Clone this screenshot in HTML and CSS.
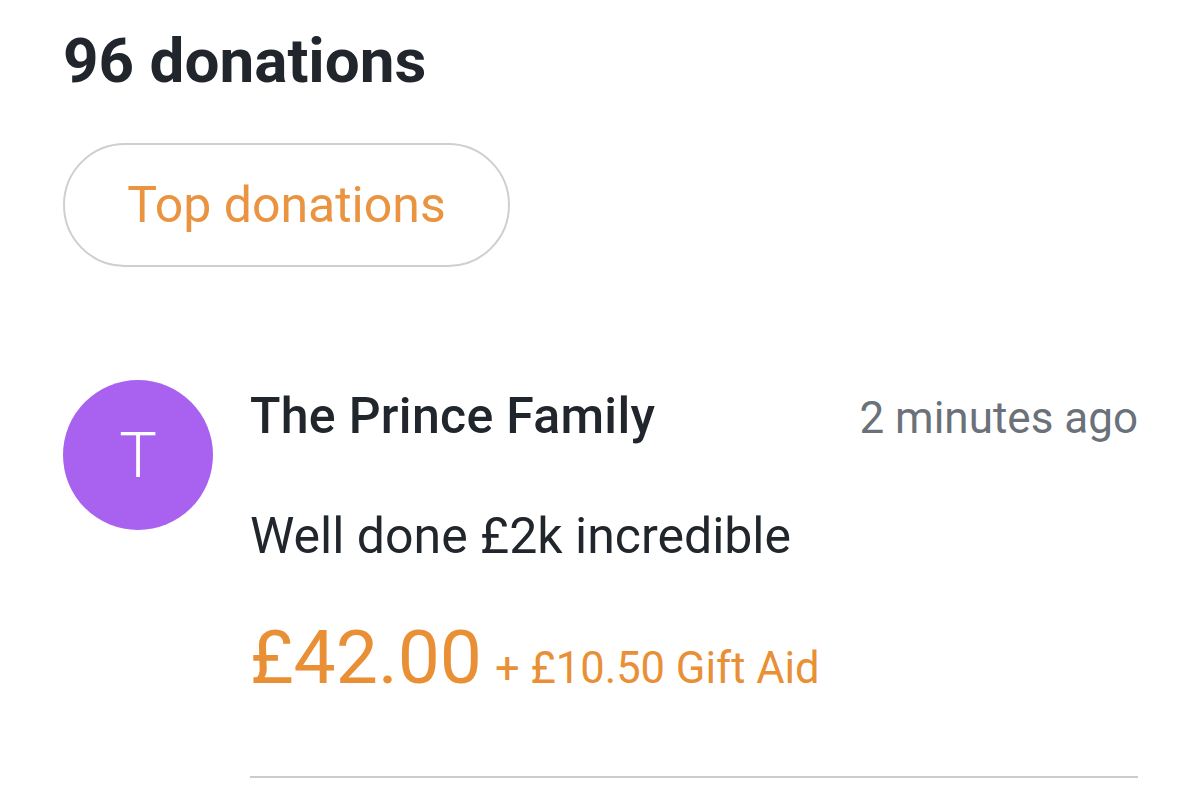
FILE: index.html
```html
<!DOCTYPE html>
<html lang="en">
<head>
  <meta charset="UTF-8" />
  <meta name="viewport" content="width=device-width, initial-scale=1.0"/>
  <title>Donations</title>
  <link rel="stylesheet" href="styles.css">
</head>
<body>

  <main class="page">
    <h1 class="donations-title">96 donations</h1>

    <button class="pill-button" type="button">Top donations</button>

    <!-- Liste des dons -->
    <ul class="donation-list">
      <li class="donation">
        <div class="avatar">T</div>
        <div class="donation-body">
          <div class="donation-head">
            <span class="donor-name">The Prince Family</span>
            <span class="donation-time">2 minutes ago</span>
          </div>
          <p class="donation-message">Well done £2k incredible</p>
          <div class="donation-amount">
            <span class="amount">£42.00</span>
            <span class="gift-aid">+ £10.50 Gift Aid</span>
          </div>
          <hr class="divider">
        </div>
      </li>
    </ul>
  </main>

</body>
</html>
```

FILE: styles.css
```css
/* Reset et styles de base */
* {
  margin: 0;
  padding: 0;
  box-sizing: border-box;
  font-family: Roboto, 'Liberation Sans', Arial, sans-serif;
}
body {
  background-color: #fff;
  color: #21262d;
  overflow: hidden;
}

.page {
  padding: 23px 62px 0 63px;
  display: flex;
  flex-direction: column;
  align-items: flex-start;
}

/* Titre */
.donations-title {
  font-size: 62px;
  line-height: 76px;
  font-weight: 700;
  color: #21262d;
}

/* Bouton pilule */
.pill-button {
  margin-top: 44px;
  height: 124px;
  width: 447px;
  display: flex;
  align-items: center;
  justify-content: center;
  background: #fff;
  border: 2px solid #cfcfcf;
  border-radius: 62px;
  color: #ea9340;
  font-size: 50px;
  font-weight: 400;
  cursor: pointer;
}

/* Liste */
.donation-list {
  list-style: none;
  width: 100%;
  margin-top: 113px;
}
.donation {
  display: flex;
  gap: 37px;
}
.avatar {
  flex: none;
  width: 150px;
  height: 150px;
  border-radius: 50%;
  background-color: #a962ef;
  color: #fff;
  font-size: 63px;
  font-weight: 300;
  display: flex;
  align-items: center;
  justify-content: center;
}
.donation-body {
  flex: 1;
  padding-top: 8px;
}
.donation-head {
  display: flex;
  justify-content: space-between;
  align-items: baseline;
}
.donor-name {
  font-size: 50px;
  line-height: 56px;
  font-weight: 500;
  letter-spacing: 0.3px;
  color: #21262d;
}
.donation-time {
  font-size: 44px;
  line-height: 56px;
  color: #6a7179;
}
.donation-message {
  margin-top: 61px;
  font-size: 50px;
  line-height: 58px;
  color: #21262d;
}
.donation-amount {
  margin-top: 46px;
  display: flex;
  align-items: baseline;
  gap: 13px;
  color: #e98f36;
}
.amount {
  font-size: 75px;
  line-height: 92px;
}
.gift-aid {
  font-size: 43.5px;
  line-height: 52px;
}
.divider {
  margin-top: 73px;
  border: none;
  height: 2px;
  background-color: #cccccc;
}
```
